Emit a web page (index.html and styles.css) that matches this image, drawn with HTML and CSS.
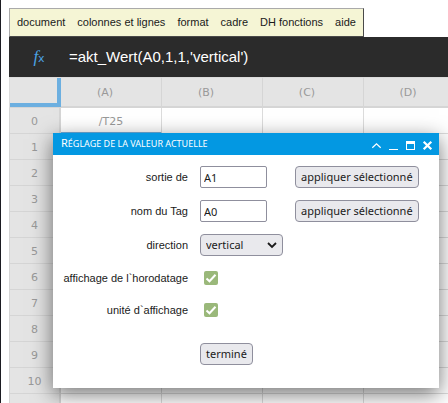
FILE: index.html
```html
<!DOCTYPE html>
<html lang="fr">
<head>
<meta charset="utf-8">
<title>Réglage de la valeur actuelle</title>
<link rel="stylesheet" href="styles.css">
</head>
<body>
<main class="workspace">
  <nav class="menu">
    <button type="button">document</button>
    <button type="button">colonnes et lignes</button>
    <button type="button">format</button>
    <button type="button">cadre</button>
    <button type="button">DH fonctions</button>
    <button type="button">aide</button>
  </nav>
  <div class="formula">
    <label class="formula-label" for="formula">f<span>x</span></label>
    <input class="formula-input" id="formula" type="text" value="=akt_Wert(A0,1,1,'vertical')">
  </div>
  <div class="sheet-wrap">
    <table class="sheet">
      <thead>
        <tr><td class="corner"><div class="select-all"></div></td><th>(A)</th><th>(B)</th><th>(C)</th><th>(D)</th></tr>
      </thead>
      <tbody>
        <tr><th>0</th><td class="selected">/T25</td><td></td><td></td><td></td></tr>
        <tr><th>1</th><td></td><td></td><td></td><td></td></tr>
        <tr><th>2</th><td></td><td></td><td></td><td></td></tr>
        <tr><th>3</th><td></td><td></td><td></td><td></td></tr>
        <tr><th>4</th><td></td><td></td><td></td><td></td></tr>
        <tr><th>5</th><td></td><td></td><td></td><td></td></tr>
        <tr><th>6</th><td></td><td></td><td></td><td></td></tr>
        <tr><th>7</th><td></td><td></td><td></td><td></td></tr>
        <tr><th>8</th><td></td><td></td><td></td><td></td></tr>
        <tr><th>9</th><td></td><td></td><td></td><td></td></tr>
        <tr><th>10</th><td></td><td></td><td></td><td></td></tr>
        <tr><th></th><td></td><td></td><td></td><td></td></tr>
      </tbody>
    </table>
  </div>
</main>
<section class="dialog" role="dialog" aria-labelledby="dialog-title">
  <header class="titlebar">
    <h1 id="dialog-title">Réglage de la valeur actuelle</h1>
    <div class="window-controls">
      <button type="button" aria-label="Enrouler"><svg viewBox="0 0 11 11"><path d="M1.300 7.800 5.500 3.800 9.700 7.800" fill="none" stroke="currentColor" stroke-width="1.2"/></svg></button>
      <button type="button" aria-label="Réduire"><svg viewBox="0 0 11 11"><path d="M1 9h9v1H1z" fill="currentColor"/></svg></button>
      <button type="button" aria-label="Agrandir"><svg viewBox="0 0 11 11"><path d="M1 1h9v9H1zM2 4v5h7V4z" fill="currentColor" fill-rule="evenodd"/></svg></button>
      <button type="button" aria-label="Fermer"><svg viewBox="0 0 11 11"><path d="M1.700 1.700l7.600 7.600M9.300 1.700l-7.600 7.600" fill="none" stroke="currentColor" stroke-width="2.2"/></svg></button>
    </div>
  </header>
  <form class="settings">
    <label for="output">sortie de</label>
    <input class="field" id="output" type="text" value="A1">
    <button class="action" type="button">appliquer sélectionné</button>

    <label for="tag">nom du Tag</label>
    <input class="field" id="tag" type="text" value="A0">
    <button class="action" type="button">appliquer sélectionné</button>

    <label for="direction">direction</label>
    <div class="wide select">
      <select id="direction"><option>vertical</option><option>horizontal</option></select>
      <svg viewBox="0 0 10 10"><path d="M1 3 5 7 9 3" fill="none" stroke="currentColor" stroke-width="1.8"/></svg>
    </div>

    <label for="timestamp">affichage de l`horodatage</label>
    <div class="wide check">
      <input id="timestamp" type="checkbox" checked>
      <svg viewBox="0 0 14 14"><path d="M2.500 7.500 5.500 10.300 11.500 3.800" fill="none" stroke="currentColor" stroke-width="2"/></svg>
    </div>

    <label for="unit">unité d`affichage</label>
    <div class="wide check">
      <input id="unit" type="checkbox" checked>
      <svg viewBox="0 0 14 14"><path d="M2.500 7.500 5.500 10.300 11.500 3.800" fill="none" stroke="currentColor" stroke-width="2"/></svg>
    </div>

    <button class="action done" type="button">terminé</button>
  </form>
</section>
</body>
</html>
```
FILE: styles.css
```css
* {
  box-sizing: border-box;
}

html {
  height: 100%;
  overflow: hidden;
}

body {
  position: relative;
  min-height: 100%;
  margin: 0;
  border-left: 1px solid #1c1c22;
  background: #fff;
  color: #1a1a1a;
  font: 11px/14px "Liberation Sans", sans-serif;
}

button,
input,
select {
  margin: 0;
  font: inherit;
  color: inherit;
}

.workspace {
  padding: 8px 0 0 8px;
}

.menu {
  display: flex;
  gap: 12px;
  width: fit-content;
  height: 29px;
  padding: 0 7px 2px;
  border: 1px solid #4a4a4a;
  border-top-color: #aaa;
  border-left-color: #aaa;
  background: #f5f5d5;
}

.menu button {
  padding: 0;
  border: 0;
  background: none;
  white-space: nowrap;
}

.formula {
  display: flex;
  align-items: center;
  height: 40px;
  background: #2b2b2b;
  color: #fff;
}

.formula-label {
  width: 60px;
  padding-top: 2px;
  color: #4ba3e3;
  text-align: center;
  font: italic 17px/20px "Liberation Serif", serif;
}

.formula-label span {
  font: 11px/20px "DejaVu Sans", sans-serif;
}

.formula-input {
  flex: 1;
  min-width: 0;
  padding: 0;
  border: 0;
  background: none;
  font-size: 15px;
  line-height: 20px;
}

.sheet-wrap {
  overflow: hidden;
}

.sheet {
  width: 456px;
  border-spacing: 0;
  table-layout: fixed;
  color: #999;
  font: 11px/14px "DejaVu Sans", sans-serif;
}

.sheet th,
.sheet td {
  width: 101px;
  height: 26px;
  padding: 2px 12px 0 0;
  border: solid #dcdcdc;
  border-width: 0 1px 1px 0;
  font-weight: normal;
  text-align: center;
}

.sheet th,
.sheet .corner {
  background: #e4e4e4;
}

.sheet thead th,
.sheet .corner {
  height: 31px;
  border-top: 1px solid #dcdcdc;
  border-bottom: 2px solid #d5d5d5;
  border-right-color: #d5d5d5;
}

.sheet .corner {
  width: 52px;
  padding: 0;
  border-width: 1px 0 1px 1px;
}

.sheet tbody th {
  padding: 2px 0 0;
  border-left: 1px solid #d5d5d5;
  border-right: 2px solid #d5d5d5;
  border-bottom-color: #d5d5d5;
}

.sheet tbody td {
  padding: 3px 0 0;
}

.select-all {
  height: 29px;
  border: solid #6cafe0;
  border-width: 0 4px 4px 0;
}

.sheet .selected {
  border-bottom: 2px solid #6cafe0;
}

.dialog {
  position: absolute;
  top: 133px;
  left: 52px;
  right: 9px;
  background: #fff;
  box-shadow: 0 6px 20px rgba(0, 0, 0, 0.55);
}

.titlebar {
  display: flex;
  align-items: flex-end;
  justify-content: space-between;
  height: 22px;
  padding: 0 6px 0 8px;
  background: #0398e2;
  color: #fff;
}

.titlebar h1 {
  margin: 0;
  font: 9px/22px "Noto Sans", sans-serif;
  text-transform: uppercase;
}

.titlebar h1::first-letter {
  font-size: 11px;
}

.window-controls {
  display: flex;
  gap: 6px;
  padding-bottom: 4px;
}

.window-controls button {
  width: 11px;
  height: 11px;
  padding: 0;
  border: 0;
  background: none;
}

.window-controls svg {
  display: block;
  width: 11px;
  height: 11px;
}

.settings {
  display: grid;
  grid-template-columns: 135px 83px 1fr;
  gap: 12px;
  align-items: center;
  padding: 11px 0 23px;
}

.settings label {
  text-align: right;
  white-space: nowrap;
}

.field,
.action,
.select select {
  height: 22px;
  border: 1px solid #8f8f9d;
  border-radius: 4px;
  background: #e9e9ed;
  font-family: "Noto Sans", sans-serif;
  font-size: 11px;
  line-height: 18px;
}

.field {
  width: 67px;
  padding: 0 3px;
  border-radius: 2px;
  background: #fff;
}

.action {
  justify-self: start;
  padding: 0 5px;
  white-space: nowrap;
}

.wide {
  grid-column: 2 / -1;
}

.select {
  position: relative;
  width: 83px;
  height: 22px;
}

.select select {
  width: 100%;
  padding: 0 5px;
  appearance: none;
}

.select svg {
  position: absolute;
  top: 6px;
  right: 6px;
  width: 10px;
  height: 10px;
  pointer-events: none;
}

.check {
  position: relative;
  height: 20px;
  padding: 3px 4px;
  color: #fff;
}

.check input {
  display: block;
  width: 14px;
  height: 14px;
  border-radius: 2px;
  background: #9ab87a;
  appearance: none;
}

.check svg {
  position: absolute;
  top: 3px;
  left: 4px;
  width: 14px;
  height: 14px;
  pointer-events: none;
}

.done {
  grid-column: 2;
  margin-top: 11px;
}
```
